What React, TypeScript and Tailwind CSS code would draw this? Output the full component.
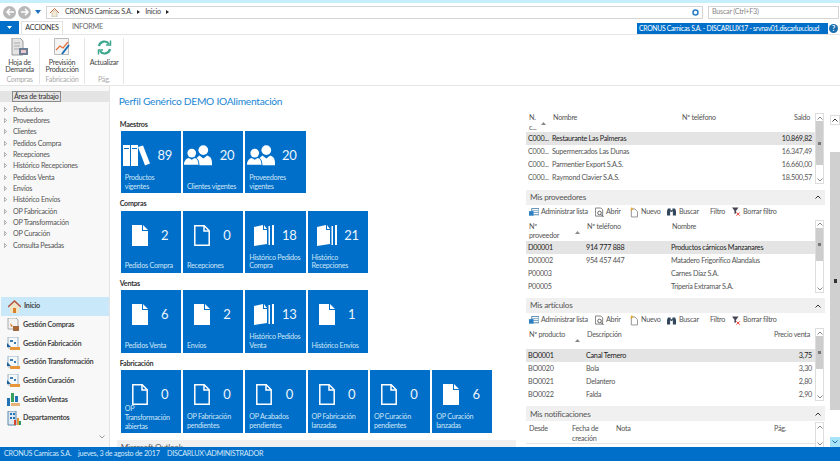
import { ReactNode } from "react";

const font = { fontFamily: 'Lato, "Noto Sans", sans-serif' };

const DocFill = () => (
  <svg width="16" height="21" viewBox="0 0 16 21" fill="#fff">
    <path d="M0 0h10v6h6v15H0z" />
    <path d="M11 0l5 5h-5z" />
  </svg>
);

const DocLine = () => (
  <svg width="16" height="21" viewBox="0 0 16 21" fill="none" stroke="#fff" strokeWidth="1.5">
    <path d="M.8.8h9.4l5 5v14.4H.8z" />
    <path d="M10 .8v5.2h5.2" />
  </svg>
);

const DocStack = () => (
  <svg width="20" height="21" viewBox="0 0 20 21" fill="#fff">
    <path d="M0 2l9-2v5h4v14l-13 2z" />
    <path d="M10 0l3 4h-3z" />
    <path d="M14.500 1h1.500v19h-1.500zM18 0h2v20h-2z" />
  </svg>
);

const Books = () => (
  <svg className="mr-[7px]" width="27" height="21" viewBox="0 0 27 21" fill="#fff">
    <path d="M0 0h7v21H0zM8 0h7v21H8z" />
    <path d="M15 2l5-1.500 7 18-5 2z" />
    <path d="M1 3h5v1H1zM9 3h5v1H9z" fill="#006fc9" />
  </svg>
);

const People = () => (
  <svg className="mr-[7px]" width="28" height="21" viewBox="0 0 29 21" fill="#fff">
    <circle cx="8" cy="8" r="4.500" />
    <path d="M0 20c0-5 3-6.500 5-7l3 2 3-2c2 .5 4 2 4 7z" />
    <circle cx="20" cy="5" r="5" />
    <path d="M16 20.500c0-4-1-6-3-7.500l3-2.500 4 3 4-3c3 1 5 3 5 7.500v2.500z" />
  </svg>
);

const icons: Record<string, ReactNode> = {
  fill: <DocFill />,
  line: <DocLine />,
  stack: <DocStack />,
  books: <Books />,
  people: <People />,
};

const Tile = ({ icon, n, label }: { icon: string; n: number; label: string }) => (
  <div className="w-[60.300px] h-[62.500px] bg-[#006fc9] text-white flex flex-col shrink-0">
    <div className="flex items-center h-[21px] mt-[14px]">
      <div className="w-[38px] flex justify-center shrink-0">{icons[icon]}</div>
      <div className="w-[12px] flex justify-center text-[13px] leading-none text-[#eef6fc]">{n}</div>
    </div>
    <div className="mt-auto px-[4px] pb-[2px] text-[7.200px] leading-[8.700px] text-[#cfe5f6] whitespace-pre-line">{label}</div>
  </div>
);

const Group = ({ title, tiles }: { title: string; tiles: [string, number, string][] }) => (
  <div className="mb-[5px]">
    <div className="text-[7.200px] font-bold leading-[12px] h-[12.300px] -ml-[1px] text-[#333]">{title}</div>
    <div className="flex gap-[2px]">
      {tiles.map((t) => (
        <Tile key={t[2]} icon={t[0]} n={t[1]} label={t[2]} />
      ))}
    </div>
  </div>
);

const Chevron = ({ up, color = "#666" }: { up?: boolean; color?: string }) => (
  <svg width="6" height="4" viewBox="0 0 6 4" fill="none" stroke={color} strokeWidth="1">
    <path d={up ? "M.5 3.500L3 1l2.500 2.500" : "M.5.500L3 3 5.500.500"} />
  </svg>
);

const TableScroll = ({ thumb }: { thumb: number }) => (
  <div className="w-[9px] shrink-0 border border-[#ddd] flex flex-col items-center">
    <div className="h-[7px] flex items-center shrink-0">
      <Chevron up color="#888" />
    </div>
    {thumb > 0 && (
      <div className="w-full bg-[#cdcdcd] flex items-center justify-center shrink-0" style={{ height: thumb }}>
        <div className="w-[3px] h-[3px] bg-[#777]" />
      </div>
    )}
    <div className="mt-auto h-[7px] flex items-center shrink-0">
      <Chevron color="#888" />
    </div>
  </div>
);

type Col = { w: string; label: string; right?: boolean; sort?: boolean };

const DataTable = ({
  cols,
  rows,
  headH,
  thumb,
  scrollH,
}: {
  cols: Col[];
  rows: string[][];
  headH: string;
  thumb: number;
  scrollH: string;
}) => (
  <div className={`flex ${scrollH} overflow-hidden`}>
    <div className="w-[289px] shrink-0 text-[7.200px] leading-[9.500px]">
      <div className={`flex ${headH} text-[#555]`}>
        {cols.map((c) => (
          <div
            key={c.label}
            className={`${c.w} shrink-0 pl-[3px] pr-[5px] relative whitespace-pre-line ${c.right ? "text-right" : ""}`}
          >
            {c.label}
            {c.sort && (
              <svg className="absolute right-[4px] top-[9px]" width="5" height="3" viewBox="0 0 5 3" fill="#888">
                <path d="M2.500 0L5 3H0z" />
              </svg>
            )}
          </div>
        ))}
      </div>
      {rows.map((r, i) => (
        <div
          key={r[0] + i}
          className={`flex h-[13.100px] items-center ${i === 0 ? "bg-[#e4e4e4] text-[#222]" : "text-[#555]"}`}
        >
          {cols.map((c, j) => (
            <div
              key={c.label}
              className={`${c.w} shrink-0 pl-[2px] pr-[3px] whitespace-nowrap overflow-hidden ${c.right ? "text-right" : ""}`}
            >
              {r[j]}
            </div>
          ))}
        </div>
      ))}
    </div>
    <TableScroll thumb={thumb} />
  </div>
);

const SectionHead = ({ title }: { title: string }) => (
  <div className="h-[15px] bg-[#f0f0f0] flex items-center justify-between px-[4px] text-[8.200px] text-[#555] w-[299px] shrink-0">
    {title}
    <Chevron up color="#333" />
  </div>
);

const ToolIcon = ({ kind }: { kind: string }) => {
  if (kind === "list")
    return (
      <svg width="10" height="9" viewBox="0 0 11 9">
        <path d="M3 0h8v7H3z" fill="#fff" stroke="#4a7fa8" />
        <path d="M3 2.500h8M3 4.500h8" stroke="#7aa5c6" />
        <path d="M0 3h5v5H0z" fill="#2b7fc2" />
      </svg>
    );
  if (kind === "open")
    return (
      <svg width="9" height="11" viewBox="0 0 10 11" fill="none" stroke="#777">
        <path d="M.5.500h6l2 2v7h-8z" />
        <circle cx="5" cy="6" r="2" stroke="#555" />
        <path d="M6.500 7.500L9.500 10.500" stroke="#555" />
      </svg>
    );
  if (kind === "new")
    return (
      <svg width="8" height="11" viewBox="0 0 9 11" fill="none" stroke="#888">
        <path d="M1.500 1.500h4l3 3v6h-7z" fill="#fff" />
        <path d="M2 0L3 2 1 3z" fill="#e8a92a" stroke="#e8a92a" />
      </svg>
    );
  if (kind === "find")
    return (
      <svg width="9" height="10" viewBox="0 0 10 10" fill="#33475c">
        <path d="M1 1h3v3h-.500v5H0V4zM6 1h3l1 3v5H6.500V4H6zM4 3h2v2H4z" />
      </svg>
    );
  return (
    <svg width="9" height="10" viewBox="0 0 11 11" fill="#445">
      <path d="M0 0h8L5 4v3L3 8V4z" />
      <path d="M5.500 6l4 4M9.500 6l-4 4" stroke="#e03a2c" strokeWidth="1.200" />
    </svg>
  );
};

const Toolbar = () => (
  <div className="h-[15px] flex items-center text-[7.200px] text-[#555] w-[299px] pl-[3px] whitespace-nowrap shrink-0">
    <span className="flex items-center gap-[2px] w-[66px] shrink-0">
      <ToolIcon kind="list" />
      Administrar lista
    </span>
    <span className="flex items-center gap-[2px] w-[35px] shrink-0">
      <ToolIcon kind="open" />
      Abrir
    </span>
    <span className="flex items-center gap-[3px] w-[37px] shrink-0">
      <ToolIcon kind="new" />
      Nuevo
    </span>
    <span className="flex items-center gap-[3px] w-[43px] shrink-0">
      <ToolIcon kind="find" />
      Buscar
    </span>
    <span className="w-[22px] shrink-0">Filtro</span>
    <span className="flex items-center gap-[2px]">
      <ToolIcon kind="clear" />
      Borrar filtro
    </span>
  </div>
);

const Home = () => (
  <svg width="13" height="13" viewBox="0 0 13 13">
    <path d="M2 6l4.500-4L11 6v7H2z" fill="#f1e3c6" />
    <path d="M0 7l6.500-6L13 7" fill="none" stroke="#b5563a" strokeWidth="1.500" />
    <path d="M5 8h3v5H5z" fill="#d9822b" />
  </svg>
);

const Purchase = () => (
  <svg width="13" height="14" viewBox="0 0 13 14">
    <path d="M1 0h8l2 2v9H1z" fill="#f4f4f4" stroke="#aaa" />
    <path d="M6 8h6v5H6z" fill="#a5683a" />
    <path d="M3 5l3 3-2 1z" fill="#d9822b" />
  </svg>
);

const Factory = () => (
  <svg width="14" height="14" viewBox="0 0 14 14">
    <path d="M1 0h10v11H1z" fill="#f4f8fb" stroke="#9db4c6" />
    <path d="M3 3h3v2H3zM7 5h2v2H7z" fill="#3d7fb5" />
    <path d="M0 6l4 4H0z" fill="#1f5f99" />
    <path d="M3 10h10v3H3z" fill="#e8953a" />
  </svg>
);

const Sales = () => (
  <svg width="14" height="14" viewBox="0 0 14 14">
    <path d="M0 5h3v8H0z" fill="#2273b5" />
    <path d="M4 0h3v9H4z" fill="#36a05c" />
    <path d="M8 3h3v6H8z" fill="#2273b5" />
    <path d="M4 10h9v3H4z" fill="#e5b27a" />
  </svg>
);

const Depts = () => (
  <svg width="14" height="15" viewBox="0 0 14 15">
    <path d="M1 0h8v14H1z" fill="#dfe9f2" stroke="#5c86aa" />
    <path d="M3 2h2v2H3zM6 2h2v2H6zM3 6h2v2H3zM6 6h2v2H6z" fill="#2273b5" />
    <path d="M7 9h2v5H7z" fill="#d8452e" />
    <path d="M10 7h2v7h-2z" fill="#e8953a" />
    <path d="M12 10h2v4h-2z" fill="#2b9a5b" />
  </svg>
);

const treeItems = [
  "Productos",
  "Proveedores",
  "Clientes",
  "Pedidos Compra",
  "Recepciones",
  "Histórico Recepciones",
  "Pedidos Venta",
  "Envíos",
  "Histórico Envíos",
  "OP Fabricación",
  "OP Transformación",
  "OP Curación",
  "Consulta Pesadas",
];

const navItems: [ReactNode, string][] = [
  [<Home />, "Inicio"],
  [<Purchase />, "Gestión Compras"],
  [<Factory />, "Gestión Fabricación"],
  [<Factory />, "Gestión Transformación"],
  [<Factory />, "Gestión Curación"],
  [<Sales />, "Gestión Ventas"],
  [<Depts />, "Departamentos"],
];

const RibbonButton = ({ icon, label, group, w }: { icon: ReactNode; label: string; group: string; w: string }) => (
  <div className={`${w} h-[46px] flex flex-col items-center border-r border-[#e6e6e6] text-center shrink-0`}>
    <div className="h-[20px] flex items-center justify-center">{icon}</div>
    <div className="h-[18px] text-[7.200px] leading-[7.500px] mt-[2px] text-[#444] whitespace-pre-line">{label}</div>
    <div className="text-[7.200px] leading-[8px] text-[#aaa]">{group}</div>
  </div>
);

export default function App() {
  return (
    <div className="w-[840px] h-[461px] bg-white flex flex-col overflow-hidden tracking-[-0.25px]" style={font}>
      <div className="h-[3px] bg-[#c4effb] shrink-0" />

      {/* address bar */}
      <div className="h-[18px] flex items-center pl-[3px] shrink-0">
        <div className="w-[13px] h-[13px] rounded-full bg-[#b8b8b8] flex items-center justify-center">
          <svg width="8" height="8" viewBox="0 0 8 8" fill="none" stroke="#fff" strokeWidth="1.500">
            <path d="M4 .8L1 4l3 3.200M1 4h7" />
          </svg>
        </div>
        <div className="w-[13px] h-[13px] rounded-full bg-[#b8b8b8] flex items-center justify-center ml-[2px]">
          <svg width="8" height="8" viewBox="0 0 8 8" fill="none" stroke="#fff" strokeWidth="1.500">
            <path d="M4 .8L7 4 4 7.200M7 4H0" />
          </svg>
        </div>
        <svg className="ml-[4px]" width="6" height="4" viewBox="0 0 6 4" fill="#1a6fc0">
          <path d="M0 0h6L3 4z" />
        </svg>
        <div className="ml-[5px] w-[657px] h-[13px] border border-[#d5d5d5] flex items-center text-[7.200px] text-[#444] pl-[3px]">
          <svg width="9" height="9" viewBox="0 0 9 9">
            <path d="M2 4.500L4.500 2 7 4.500V9H2z" fill="#f6ead2" stroke="#999" strokeWidth=".5" />
            <path d="M0 5l4.500-4.500L9 5" fill="none" stroke="#c96a3a" />
          </svg>
          <span className="ml-[6px]">CRONUS Carnicas S.A.</span>
          <svg className="mx-[5px]" width="3" height="4" viewBox="0 0 3 4" fill="#222">
            <path d="M0 0l3 2-3 2z" />
          </svg>
          <span>Inicio</span>
          <svg className="mx-[5px]" width="3" height="4" viewBox="0 0 3 4" fill="#222">
            <path d="M0 0l3 2-3 2z" />
          </svg>
          <svg className="ml-auto mr-[3px]" width="7" height="7" viewBox="0 0 7 7" fill="none" stroke="#2a7cc4" strokeWidth="1.500">
            <circle cx="3.500" cy="3.500" r="2.500" />
          </svg>
        </div>
        <div className="ml-[5px] w-[131px] h-[13px] border border-[#d5d5d5] flex items-center text-[7.200px] text-[#888] pl-[3px]">
          Buscar (Ctrl+F3)
        </div>
      </div>

      {/* tabs */}
      <div className="h-[13px] flex shrink-0 relative">
        <div className="w-[19px] bg-[#006fc9] flex items-center justify-center">
          <svg width="5" height="3" viewBox="0 0 5 3" fill="#fff">
            <path d="M0 0h5L2.500 3z" />
          </svg>
        </div>
        <div className="ml-[2px] w-[42px] flex items-center justify-center border border-b-0 border-[#e2e2e2] text-[7.200px] text-[#333]">
          ACCIONES
        </div>
        <div className="ml-[9px] flex items-center text-[7.200px] text-[#666]">INFORME</div>
        <div className="ml-auto mt-[2px] mr-[2px] flex items-center gap-[1px]">
          <div className="w-[191px] h-[11px] bg-[#006fc9] text-white text-[6.800px] tracking-[-0.3px] leading-[11px] pl-[2px] whitespace-nowrap">
            CRONUS Carnicas S.A. - DISCARLUX17 - srvnav01.discarlux.cloud
          </div>
          <div className="w-[9px] h-[9px] rounded-full bg-[#1a6fb0] text-white text-[7px] leading-[9px] text-center font-bold">
            ?
          </div>
        </div>
      </div>

      {/* ribbon */}
      <div className="h-[52px] border-y border-[#e6e6e6] flex items-start pt-[3px] shrink-0">
        <RibbonButton
          w="w-[40px]"
          label={"Hoja de\nDemanda"}
          group="Compras"
          icon={
            <svg width="17" height="18" viewBox="0 0 17 18">
              <path d="M1 0h8l3 3v14H1z" fill="#e4e4e4" stroke="#9a9a9a" />
              <path d="M3 5h6M3 8h6M3 11h6" stroke="#aaa" />
              <path d="M8 10h9v7H8z" fill="#6f7f93" />
              <path d="M10 12h5v3h-5z" fill="#e9c7cf" />
            </svg>
          }
        />
        <RibbonButton
          w="w-[45px]"
          label={"Previsión\nProducción"}
          group="Fabricación"
          icon={
            <svg width="17" height="18" viewBox="0 0 17 18" fill="none">
              <path d="M.5.500h14v16H.5z" fill="#f4f4f4" stroke="#bbb" />
              <path d="M2 12l4-4 3 2 5-6" stroke="#e2703a" strokeWidth="1.200" />
              <path d="M8 16l7-9" stroke="#1f6fb5" strokeWidth="2" />
            </svg>
          }
        />
        <RibbonButton
          w="w-[39px]"
          label="Actualizar"
          group="Pág."
          icon={
            <svg width="15" height="15" viewBox="0 0 15 15" fill="none" stroke="#3aa68c" strokeWidth="2.200">
              <path d="M2 6a5.500 5.500 0 0 1 10-2" />
              <path d="M13 9a5.500 5.500 0 0 1-10 2" />
              <path d="M13.500.500v4.500H9M1.500 14.500V10H6" strokeWidth="1.500" />
            </svg>
          }
        />
      </div>

      {/* body */}
      <div className="flex-1 flex min-h-0">
        <aside className="w-[110px] shrink-0 bg-[#f8f8f8] border-r border-[#e4e4e4] flex flex-col pt-[5px]">
          <div className="h-[11px] bg-[#e4e4e4] flex items-center pl-[12px]">
            <span className="border border-[#8a8a8a] px-[1px] text-[7.200px] leading-[9px] text-[#333]">
              Área de trabajo
            </span>
          </div>
          <div className="mt-[1.500px] text-[7.200px] text-[#555]">
            {treeItems.map((t) => (
              <div key={t} className="h-[11.350px] flex items-center pl-[4px] whitespace-nowrap leading-none">
                <svg className="mr-[6px] shrink-0" width="3" height="5" viewBox="0 0 3 5" fill="none" stroke="#999" strokeWidth=".8">
                  <path d="M.4.400l2.200 2.100L.4 4.600z" />
                </svg>
                {t}
              </div>
            ))}
          </div>
          <div className="mt-auto pb-[1px]">
            {navItems.map(([ic, t], i) => (
              <div
                key={t}
                className={`h-[18.700px] flex items-center pl-[7px] text-[7.200px] font-bold text-[#444] ${
                  i === 0 ? "bg-[#c9e8f9] ml-[1px] pl-[6px]" : ""
                }`}
              >
                <span className="w-[16px] flex justify-start shrink-0">{ic}</span>
                <span className="whitespace-nowrap">{t}</span>
              </div>
            ))}
            <div className="h-[18px] flex items-center justify-end pr-[4px]">
              <Chevron color="#999" />
            </div>
          </div>
        </aside>

        <main className="w-[416px] shrink-0 pl-[10.700px] overflow-hidden flex flex-col">
          <h1 className="text-[10.200px] font-normal text-[#1a86d4] leading-[16px] mt-[7px] -ml-[2px] whitespace-nowrap">
            Perfil Genérico DEMO IOAlimentación
          </h1>
          <div className="mt-[9.500px]">
            <Group
              title="Maestros"
              tiles={[
                ["books", 89, "Productos vigentes"],
                ["people", 20, "Clientes vigentes"],
                ["people", 20, "Proveedores vigentes"],
              ]}
            />
            <Group
              title="Compras"
              tiles={[
                ["fill", 2, "Pedidos Compra"],
                ["line", 0, "Recepciones"],
                ["stack", 18, "Histórico Pedidos Compra"],
                ["stack", 21, "Histórico Recepciones"],
              ]}
            />
            <Group
              title="Ventas"
              tiles={[
                ["fill", 6, "Pedidos Venta"],
                ["fill", 2, "Envíos"],
                ["stack", 13, "Histórico Pedidos Venta"],
                ["fill", 1, "Histórico Envíos"],
              ]}
            />
            <Group
              title="Fabricación"
              tiles={[
                ["line", 0, "OP\nTransformación\nabiertas"],
                ["line", 0, "OP Fabricación pendientes"],
                ["line", 0, "OP Acabados pendientes"],
                ["line", 0, "OP Fabricación lanzadas"],
                ["line", 0, "OP Curación pendientes"],
                ["fill", 6, "OP Curación lanzadas"],
              ]}
            />
          </div>
          <div className="mt-[2.300px] -ml-[4px] w-[399px] h-[20px] bg-[#f0f0f0] pl-[4px] pt-[2px] text-[8.200px] leading-[11px] text-[#555]">
            Microsoft Outlook
          </div>
        </main>

        <section className="w-[299px] shrink-0 pt-[27px] overflow-hidden flex flex-col">
          <div className="mb-[5.400px]">
            <DataTable
              scrollH="h-[71.400px]"
              headH="h-[19px]"
              thumb={44}
              cols={[
                { w: "w-[24px]", label: "N.\nc...", sort: true },
                { w: "w-[129px]", label: "Nombre" },
                { w: "w-[96px]", label: "Nº teléfono" },
                { w: "w-[40px]", label: "Saldo", right: true },
              ]}
              rows={[
                ["C000...", "Restaurante Las Palmeras", "", "10.869,82"],
                ["C000...", "Supermercados Las Dunas", "", "16.347,49"],
                ["C000...", "Parmentier Export S.A.S.", "", "16.660,00"],
                ["C000...", "Raymond Clavier S.A.S.", "", "18.500,57"],
              ]}
            />
          </div>
          <SectionHead title="Mis proveedores" />
          <Toolbar />
          <div className="mb-[4.600px]">
            <DataTable
              scrollH="h-[73.700px]"
              headH="h-[21.300px] pt-[2px]"
              thumb={33}
              cols={[
                { w: "w-[58px]", label: "Nº\nproveedor", sort: true },
                { w: "w-[85px]", label: "Nº teléfono" },
                { w: "w-[146px]", label: "Nombre" },
              ]}
              rows={[
                ["D00001", "914 777 888", "Productos cárnicos Manzanares"],
                ["D00002", "954 457 447", "Matadero Frigorífico Alandalus"],
                ["P00003", "", "Carnes Díaz S.A."],
                ["P00005", "", "Tripería Extramar S.A."],
              ]}
            />
          </div>
          <SectionHead title="Mis artículos" />
          <Toolbar />
          <div className="mb-[5px]">
            <DataTable
              scrollH="h-[73.400px]"
              headH="h-[21px] pt-[2px]"
              thumb={33}
              cols={[
                { w: "w-[58px]", label: "Nº producto", sort: true },
                { w: "w-[185px]", label: "Descripción" },
                { w: "w-[46px]", label: "Precio venta", right: true },
              ]}
              rows={[
                ["BO0001", "Canal Ternero", "3,75"],
                ["BO0020", "Bola", "3,30"],
                ["BO0021", "Delantero", "2,80"],
                ["BO0022", "Falda", "2,90"],
              ]}
            />
          </div>
          <SectionHead title="Mis notificaciones" />
          <div className="border-b border-[#e4e4e4] w-[289px] h-0 mt-[21.600px]" />
          <div className="-mt-[21.600px]">
            <DataTable
              scrollH="h-[26px]"
              headH="h-[21.600px] pt-[2px]"
              thumb={0}
              cols={[
                { w: "w-[43px]", label: "Desde" },
                { w: "w-[44px]", label: "Fecha de creación" },
                { w: "w-[158px]", label: "Nota" },
                { w: "w-[44px]", label: "Pág." },
              ]}
              rows={[]}
            />
          </div>
        </section>

        {/* page scrollbar */}
        <div className="ml-auto w-[10px] shrink-0 flex flex-col items-center pt-[29px]">
          <div className="w-full h-[10px] border border-[#ddd] flex items-center justify-center">
            <Chevron up color="#333" />
          </div>
          <div className="h-[27px]" />
          <div className="w-full h-[258px] bg-[#d0d0d0] flex items-center justify-center">
            <div className="w-[3px] h-[4px] bg-[#333]" />
          </div>
          <div className="flex-1" />
          <div className="w-full h-[10px] bg-[#a8e4f8] flex items-center justify-center">
            <Chevron color="#1a6fb0" />
          </div>
        </div>
      </div>

      {/* status bar */}
      <div className="h-[14px] bg-[#006fc9] text-[#d7eafa] text-[7.200px] flex items-center pl-[4px] shrink-0 whitespace-nowrap">
        <span className="w-[74px]">CRONUS Carnicas S.A.</span>
        <span className="w-[89px]">jueves, 3 de agosto de 2017</span>
        <span>DISCARLUX\ADMINISTRADOR</span>
      </div>
    </div>
  );
}
